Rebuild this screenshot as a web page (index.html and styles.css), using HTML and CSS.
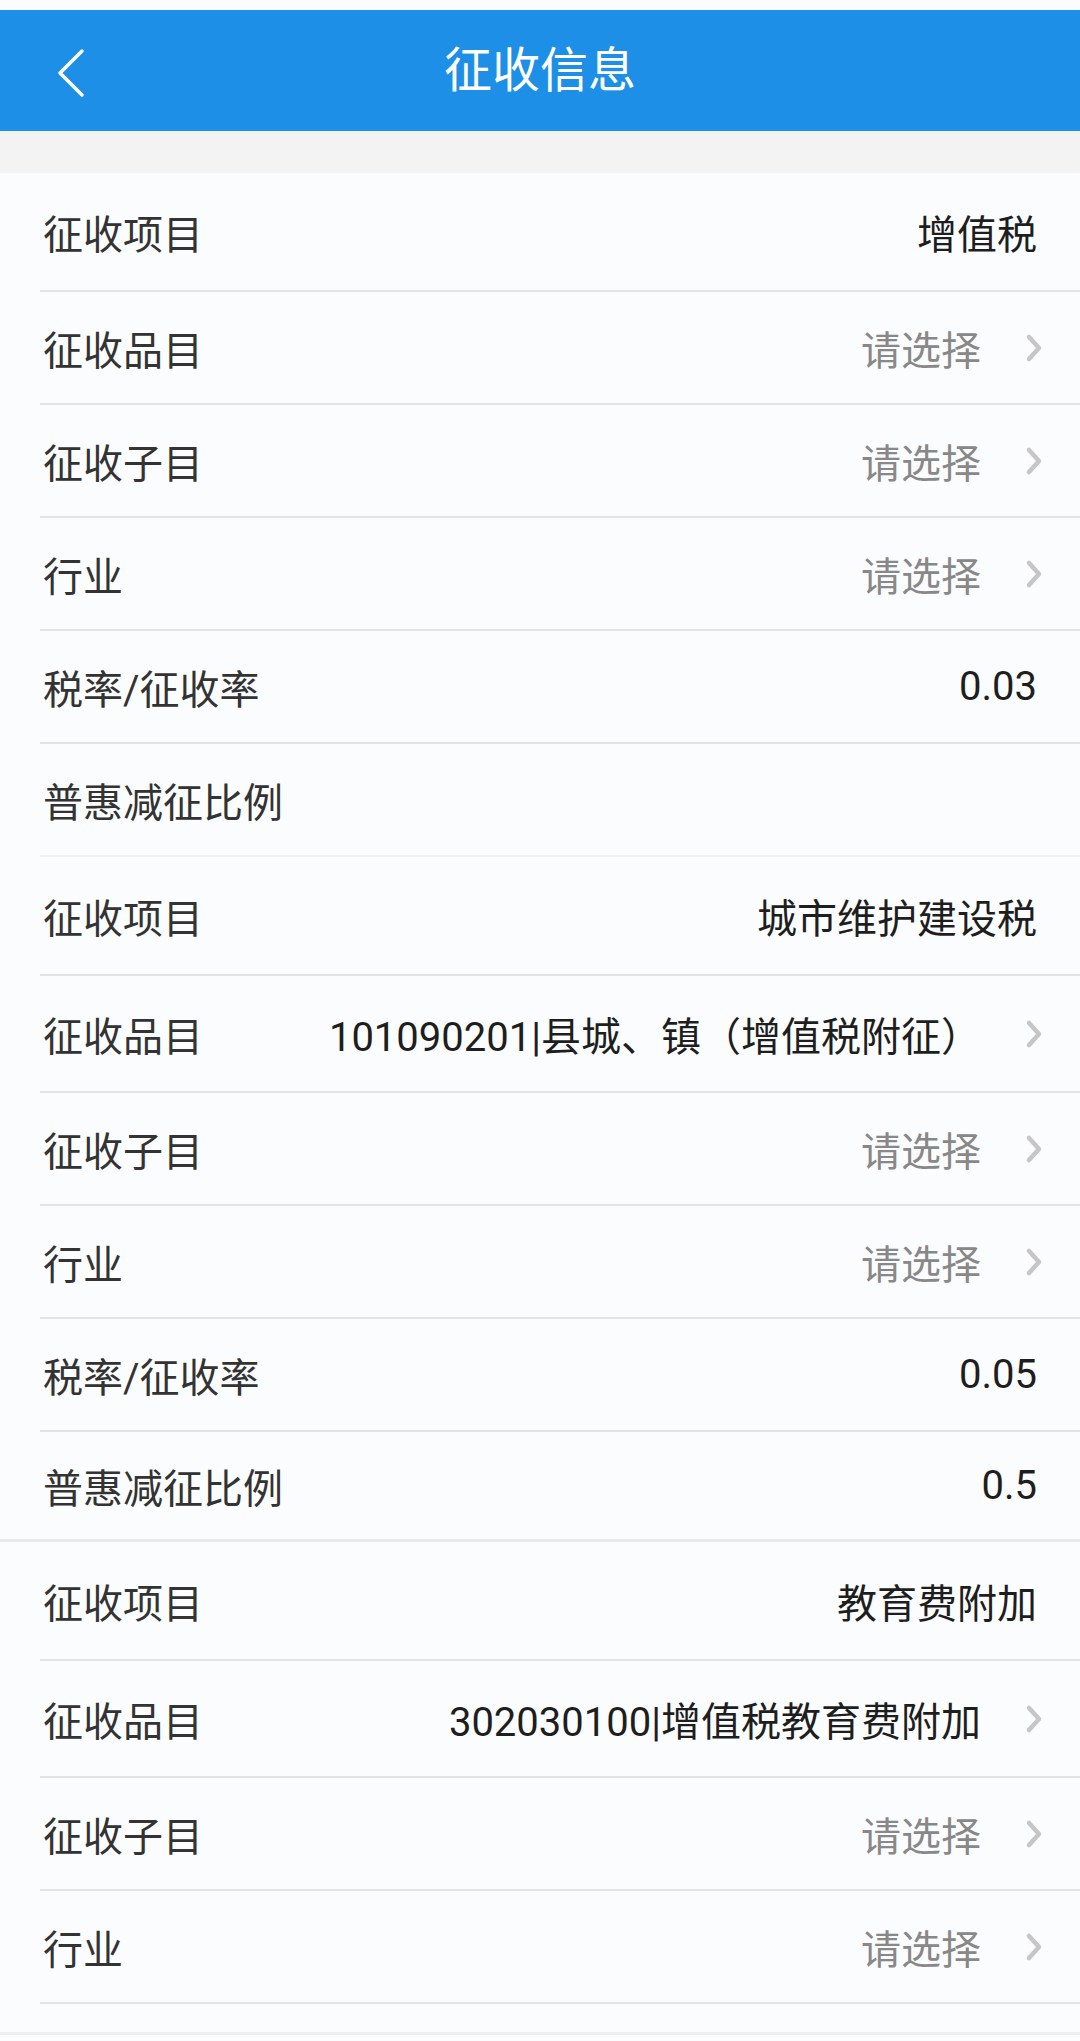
FILE: index.html
```html
<!DOCTYPE html>
<html lang="zh-CN">
<head>
    <meta charset="UTF-8">
    <title>征收信息</title>
    <link rel="stylesheet" href="styles.css">
</head>
<body>
<div class="page">
    <div class="header">
        <a class="back" href="#">
            <svg width="30" height="50" viewBox="0 0 30 50">
                <polyline points="26,3 4,25 26,47" fill="none" stroke="#fff" stroke-width="3.5" stroke-linecap="round" stroke-linejoin="round"/>
            </svg>
        </a>
        <h1 class="title">征收信息</h1>
        <span></span>
    </div>

    <div class="gap"></div>

    <!-- 增值税 -->
    <div class="section">
        <div class="row head">
            <span class="label">征收项目</span>
            <span class="value">增值税</span>
        </div>
        <div class="row">
            <span class="label">征收品目</span>
            <span class="value empty">请选择</span>
            <svg class="arrow" viewBox="0 0 18 30"><polyline points="4,4 14,15 4,26"/></svg>
        </div>
        <div class="row">
            <span class="label">征收子目</span>
            <span class="value empty">请选择</span>
            <svg class="arrow" viewBox="0 0 18 30"><polyline points="4,4 14,15 4,26"/></svg>
        </div>
        <div class="row">
            <span class="label">行业</span>
            <span class="value empty">请选择</span>
            <svg class="arrow" viewBox="0 0 18 30"><polyline points="4,4 14,15 4,26"/></svg>
        </div>
        <div class="row">
            <span class="label">税率/征收率</span>
            <span class="value">0.03</span>
        </div>
        <div class="row last">
            <span class="label">普惠减征比例</span>
            <span class="value"></span>
        </div>
    </div>

    <!-- 城市维护建设税 -->
    <div class="section split">
        <div class="row head">
            <span class="label">征收项目</span>
            <span class="value">城市维护建设税</span>
        </div>
        <div class="row filled">
            <span class="label">征收品目</span>
            <span class="value">101090201|县城、镇（增值税附征）</span>
            <svg class="arrow" viewBox="0 0 18 30"><polyline points="4,4 14,15 4,26"/></svg>
        </div>
        <div class="row">
            <span class="label">征收子目</span>
            <span class="value empty">请选择</span>
            <svg class="arrow" viewBox="0 0 18 30"><polyline points="4,4 14,15 4,26"/></svg>
        </div>
        <div class="row">
            <span class="label">行业</span>
            <span class="value empty">请选择</span>
            <svg class="arrow" viewBox="0 0 18 30"><polyline points="4,4 14,15 4,26"/></svg>
        </div>
        <div class="row">
            <span class="label">税率/征收率</span>
            <span class="value">0.05</span>
        </div>
        <div class="row">
            <span class="label">普惠减征比例</span>
            <span class="value">0.5</span>
        </div>
    </div>

    <!-- 教育费附加 -->
    <div class="section">
        <div class="row head">
            <span class="label">征收项目</span>
            <span class="value">教育费附加</span>
        </div>
        <div class="row filled">
            <span class="label">征收品目</span>
            <span class="value">302030100|增值税教育费附加</span>
            <svg class="arrow" viewBox="0 0 18 30"><polyline points="4,4 14,15 4,26"/></svg>
        </div>
        <div class="row">
            <span class="label">征收子目</span>
            <span class="value empty">请选择</span>
            <svg class="arrow" viewBox="0 0 18 30"><polyline points="4,4 14,15 4,26"/></svg>
        </div>
        <div class="row">
            <span class="label">行业</span>
            <span class="value empty">请选择</span>
            <svg class="arrow" viewBox="0 0 18 30"><polyline points="4,4 14,15 4,26"/></svg>
        </div>
    </div>
    <div class="foot"></div>
</div>
</body>
</html>
```

FILE: styles.css
```css
html, body {
    margin: 0;
    padding: 0;
    background: #fbfcfd;
}

body {
    font-family: Roboto, "Noto Sans CJK SC", sans-serif;
    color: #333;
}

.page {
    width: 1080px;
    padding-top: 10px;
}

.header {
    height: 121px;
    background: #1d8fe6;
    display: grid;
    grid-template-columns: 1fr auto 1fr;
    align-items: center;
}

.back {
    display: flex;
    align-items: center;
    padding-left: 56px;
    margin-top: 4px;
}

.title {
    margin: 0;
    color: #fff;
    font-size: 48px;
    font-weight: normal;
    line-height: 1;
}

.gap {
    height: 42px;
    background: #f3f3f3;
}

.section {
    background: #fbfcfd;
}

.section.split {
    border-bottom: 3px solid #e9e9e9;
}

.section.split .row:last-child {
    border-bottom: none;
    height: 107px;
}

.row {
    box-sizing: border-box;
    height: 113px;
    margin-left: 40px;
    padding: 0 43px 0 3px;
    border-bottom: 2px solid #e4e4e4;
    display: flex;
    align-items: center;
    font-size: 40px;
}

.row.head {
    height: 119px;
}

.row.filled {
    height: 117px;
}

.row.last {
    border-bottom-color: #f0f0f0;
}

.label {
    color: #333;
    white-space: nowrap;
}

.value {
    margin-left: auto;
    color: #1e1e1e;
    white-space: nowrap;
}

.value.empty {
    color: #888;
}

.arrow {
    width: 18px;
    height: 30px;
    margin-left: 44px;
    margin-right: -6px;
    fill: none;
    stroke: #c6c6c6;
    stroke-width: 4.5;
    stroke-linecap: round;
    stroke-linejoin: round;
}

.foot {
    height: 28px;
    border-bottom: 3px solid #eeeeee;
}
```
